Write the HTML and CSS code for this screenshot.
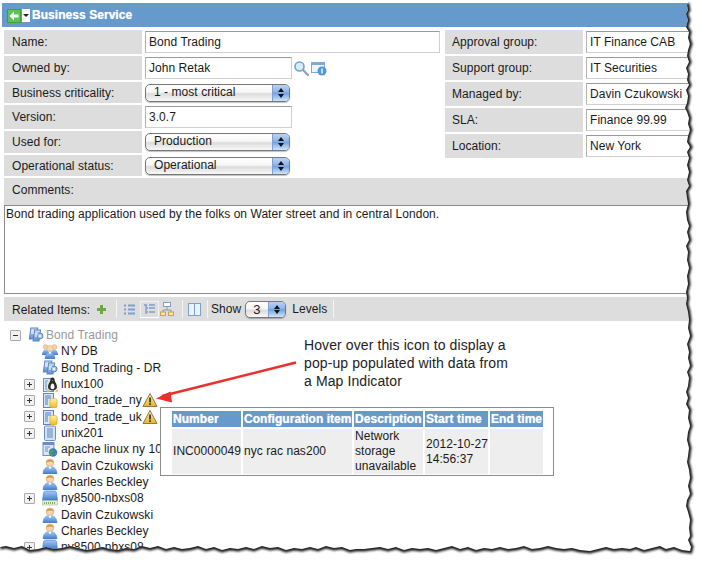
FILE: index.html
```html
<!DOCTYPE html>
<html lang="en">
<head>
<meta charset="utf-8">
<title>Business Service</title>
<link rel="stylesheet" href="styles.css">
</head>
<body>
<svg class="defs" width="0" height="0" aria-hidden="true">
  <defs>
    <linearGradient id="gBlue" x1="0" y1="0" x2="0" y2="1"><stop offset="0" stop-color="#cfe0f5"/><stop offset="1" stop-color="#5d8fd0"/></linearGradient>
    <linearGradient id="gDeep" x1="0" y1="0" x2="0" y2="1"><stop offset="0" stop-color="#a8c8f2"/><stop offset="1" stop-color="#3a7cd0"/></linearGradient>
    <linearGradient id="gGold" x1="0" y1="0" x2="0" y2="1"><stop offset="0" stop-color="#fff2a8"/><stop offset="1" stop-color="#f0b828"/></linearGradient>
    <linearGradient id="gWarn" x1="0" y1="0" x2="0" y2="1"><stop offset="0" stop-color="#fff0a0"/><stop offset="1" stop-color="#eeb030"/></linearGradient>
    <symbol id="i-service" viewBox="0 0 16 16">
      <rect x="1" y="1" width="7" height="11" fill="url(#gBlue)" stroke="#5f86bd" transform="skewX(-8) translate(2 0)"/>
      <rect x="5" y="3" width="6" height="11" fill="url(#gBlue)" stroke="#5f86bd" transform="skewX(-8) translate(2 0)"/>
      <circle cx="12" cy="9" r="3" fill="#a9c4e6" stroke="#5f86bd"/>
      <circle cx="12" cy="9" r="1" fill="#fff"/>
      <path d="M3 4h3M3 6h3M7 7h3M7 9h2" stroke="#fff" stroke-width="1"/>
    </symbol>
    <symbol id="i-group" viewBox="0 0 16 16">
      <circle cx="3.500" cy="4" r="2.400" fill="#f6d0a4" stroke="#d5a878" stroke-width=".5"/>
      <circle cx="12.500" cy="4" r="2.400" fill="#f6d0a4" stroke="#d5a878" stroke-width=".5"/>
      <path d="M0 12c0-3 1.500-5.500 3.500-5.500s4 2.500 4 5.500z" fill="url(#gDeep)"/>
      <path d="M8.500 12c0-3 2-5.500 4-5.500s3.500 2.500 3.500 5.500z" fill="url(#gDeep)"/>
      <circle cx="8" cy="5.500" r="3" fill="#f8d6ae" stroke="#d5a878" stroke-width=".5"/>
      <path d="M3 16c0-4 2.500-7 5-7s5 3 5 7z" fill="url(#gDeep)" stroke="#5f8fd0" stroke-width=".5"/>
      <path d="M6.800 9L8 11.500 9.200 9z" fill="#fff"/>
    </symbol>
    <symbol id="i-linux" viewBox="0 0 16 16">
      <rect x="1.500" y="2.500" width="10" height="13" fill="#dbe6f5" stroke="#6b8fc4"/>
      <path d="M3 5h3M3 7h2M3 9h2M3 11h2M3 13h2" stroke="#6b8fc4"/>
      <path d="M10.500 1.500c-1.500 0-2.200 1.200-2.200 3-.4 1.800-2.300 3.700-2.300 6.500 0 2 2 3.500 4.500 3.500s4.500-1.500 4.500-3.500c0-2.800-1.900-4.700-2.300-6.500 0-1.800-.7-3-2.200-3z" fill="#2b2b2b"/>
      <path d="M10.500 7.500c-1 0-2 1.700-2 3.800 0 1.200.8 2 2 2s2-.8 2-2c0-2.100-1-3.800-2-3.800z" fill="#fff"/>
      <path d="M5.500 13l2.800 2.800H4.500zM15.500 13l-2.800 2.800h3.800zM9.700 4.300h1.600l-.8 1z" fill="#f2c230"/>
    </symbol>
    <symbol id="i-dbserver" viewBox="0 0 16 16">
      <rect x="1.500" y="1.500" width="10" height="14" fill="#dbe6f5" stroke="#5f86bd"/>
      <path d="M3 4h6M3 6h6M3 8h3M3 10h3M3 12h3" stroke="#4f7dc0"/>
      <path d="M8 8c0-1 1.500-1.500 3.500-1.500S15 7 15 8v6.500c0 1-1.500 1.500-3.500 1.500S8 15.500 8 14.500z" fill="url(#gGold)" stroke="#d3a020" stroke-width=".6"/>
    </symbol>
    <symbol id="i-unix" viewBox="0 0 16 16">
      <rect x="2.500" y="1" width="11" height="14.500" rx="1" fill="#d5e2f4" stroke="#6b8fc4"/>
      <path d="M5 4h6M5 6h6M5 8h6M5 10h6M5 12h6" stroke="#5f86bd"/>
    </symbol>
    <symbol id="i-apache" viewBox="0 0 16 16">
      <rect x="1" y="1.500" width="11" height="13" fill="#dbe6f5" stroke="#6b8fc4"/>
      <rect x="1" y="1.500" width="11" height="2.500" fill="#6b8fc4"/>
      <path d="M3 6h5M3 8h3M3 10h3" stroke="#6b8fc4"/>
      <circle cx="11" cy="11.500" r="4.200" fill="#3b79d0"/>
      <path d="M9 9c2-1 3 .5 3 1.500s-2 .5-2 2 1 1.500 1.500 2.500c-2 0-4-1.500-4-3.500 0-1 1-2 1.500-2.500zM13 12c1-.5 2 0 2 .5-.3 1-1 1.800-2 2.200z" fill="#48a848"/>
    </symbol>
    <symbol id="i-person" viewBox="0 0 16 16">
      <circle cx="8" cy="4.800" r="3.800" fill="#f8d2a8" stroke="#d09c62" stroke-width=".6"/>
      <path d="M4.300 4.500C4.800 .8 11.200 .8 11.700 4.500 9.500 3.300 7 3.300 4.300 4.500z" fill="#d0934a"/>
      <path d="M1 16c0-5 3-7.500 7-7.500s7 2.500 7 7.500z" fill="url(#gDeep)" stroke="#4f86cc" stroke-width=".5"/>
      <path d="M6.300 8.500L8 11.500l1.700-3z" fill="#fff"/>
    </symbol>
    <symbol id="i-switch" viewBox="0 0 16 16">
      <path d="M3.500 1h9c1.200 0 1.800.8 2 2l1 7.500H.5l1-7.500c.2-1.200.8-2 2-2z" fill="url(#gDeep)" stroke="#3f78c8" stroke-width=".6"/>
      <rect x=".5" y="10.500" width="15" height="4.500" fill="#e4efdc" stroke="#a8bc9c" stroke-width=".6"/>
      <path d="M2 13h12" stroke="#7fa86e" stroke-width="2" stroke-dasharray="1 1"/>
    </symbol>
    <symbol id="i-warn" viewBox="0 0 16 16">
      <path d="M8 1.500L15 14.500H1z" fill="url(#gWarn)" stroke="#8f7a40" stroke-linejoin="round"/>
      <rect x="7.200" y="5.500" width="1.700" height="5" fill="#333"/>
      <rect x="7.200" y="11.300" width="1.700" height="1.700" fill="#333"/>
    </symbol>
  </defs>
</svg>

<div class="sheet">
  <header class="titlebar">
    <svg class="back" width="14" height="14" viewBox="0 0 14 14"><rect width="14" height="14" fill="#3da53a"/><rect x="1" y="1" width="12" height="12" fill="#5cc454"/><path d="M7 2.500L2.500 7 7 11.500V8.500h4.500v-3H7z" fill="#fff"/></svg>
    <span class="menu-btn"></span>
    <span class="title">Business Service</span>
  </header>

  <div class="form">
    <div class="col col-left">
      <div class="row"><span class="label">Name:</span><span class="input input-wide">Bond Trading</span></div>
      <div class="row"><span class="label">Owned by:</span><span class="input input-mid">John Retak</span>
        <svg class="row-icon" width="16" height="16" viewBox="0 0 16 16"><circle cx="6.500" cy="6.500" r="4.500" fill="#d6ecfa" stroke="#6fa3d0" stroke-width="1.600"/><path d="M10 10l5 5" stroke="#8ca3ba" stroke-width="2.400" stroke-linecap="round"/></svg>
        <svg class="row-icon" width="16" height="16" viewBox="0 0 16 16"><rect x=".5" y="2.500" width="13" height="10" fill="#eef4fb" stroke="#7faad8"/><rect x=".5" y="2.500" width="13" height="2.500" fill="#7faad8"/><circle cx="11" cy="11" r="4.500" fill="#4f98de"/><rect x="10.300" y="8.500" width="1.400" height="5" fill="#fff"/></svg>
      </div>
      <div class="row"><span class="label">Business criticality:</span><span class="select select-sm"><span class="select-text">1 - most critical</span><span class="stepper"></span></span></div>
      <div class="row"><span class="label">Version:</span><span class="input input-mid">3.0.7</span></div>
      <div class="row"><span class="label">Used for:</span><span class="select"><span class="select-text">Production</span><span class="stepper"></span></span></div>
      <div class="row"><span class="label">Operational status:</span><span class="select"><span class="select-text">Operational</span><span class="stepper"></span></span></div>
    </div>
    <div class="col col-right">
      <div class="row"><span class="label">Approval group:</span><span class="input input-fill">IT Finance CAB</span></div>
      <div class="row"><span class="label">Support group:</span><span class="input input-fill">IT Securities</span></div>
      <div class="row"><span class="label">Managed by:</span><span class="input input-fill">Davin Czukowski</span></div>
      <div class="row"><span class="label">SLA:</span><span class="input input-fill">Finance 99.99</span></div>
      <div class="row"><span class="label">Location:</span><span class="input input-fill">New York</span></div>
    </div>
  </div>

  <div class="comments-label">Comments:</div>
  <div class="comments">Bond trading application used by the folks on Water street and in central London.</div>

  <div class="toolbar">
    <span class="tb-label">Related Items:</span>
    <svg class="tb-plus" width="9" height="9" viewBox="0 0 9 9"><path d="M3 0h3v3h3v3H6v3H3V6H0V3h3z" fill="#6fa83f"/></svg>
    <span class="tb-sep tb-sep-a"></span>
    <svg class="tb-list" width="11" height="11" viewBox="0 0 11 11"><path d="M0 1.500h2M4 1.500h7M0 5.500h2M4 5.500h7M0 9.500h2M4 9.500h7" stroke="#7f9fcc" stroke-width="2"/></svg>
    <span class="tb-active"><svg width="11" height="11" viewBox="0 0 11 11"><path d="M0 1h3M2 1v9M2 4h2M2 8h2M5 1h6M5 4h6M5 8h6" stroke="#7f9fcc" stroke-width="1.300"/></svg></span>
    <svg class="tb-map" width="14" height="14" viewBox="0 0 14 14"><rect x="3.500" y=".5" width="7" height="4" fill="#fff" stroke="#7f9fcc"/><path d="M7 5v3M3 10V8h8v2" stroke="#8f9aa8" fill="none"/><rect x=".5" y="10" width="5" height="3.500" fill="#f6e6a8" stroke="#c9a63a"/><rect x="8.500" y="10" width="5" height="3.500" fill="#f6e6a8" stroke="#c9a63a"/></svg>
    <span class="tb-sep tb-sep-b"></span>
    <svg class="tb-split" width="13" height="13" viewBox="0 0 13 13"><rect x=".5" y=".5" width="12" height="12" fill="#eaf2fb" stroke="#7f9fcc"/><path d="M6.500 1v11" stroke="#7f9fcc"/></svg>
    <span class="tb-sep tb-sep-c"></span>
    <span class="tb-text">Show</span>
    <span class="select select-levels"><span class="select-text">3</span><span class="stepper"></span></span>
    <span class="tb-text tb-levels">Levels</span>
    <span class="tb-sep tb-sep-d"></span>
  </div>

  <ul class="tree">
    <li class="node node-root"><span class="exp exp-minus"></span><svg class="ico"><use href="#i-service"/></svg><span>Bond Trading</span></li>
    <li class="node"><span class="exp exp-none"></span><svg class="ico"><use href="#i-group"/></svg><span>NY DB</span></li>
    <li class="node"><span class="exp exp-none"></span><svg class="ico"><use href="#i-service"/></svg><span>Bond Trading - DR</span></li>
    <li class="node"><span class="exp"></span><svg class="ico"><use href="#i-linux"/></svg><span>lnux100</span></li>
    <li class="node"><span class="exp"></span><svg class="ico"><use href="#i-dbserver"/></svg><span>bond_trade_ny</span><svg class="ico-warn"><use href="#i-warn"/></svg></li>
    <li class="node"><span class="exp"></span><svg class="ico"><use href="#i-dbserver"/></svg><span>bond_trade_uk</span><svg class="ico-warn"><use href="#i-warn"/></svg></li>
    <li class="node"><span class="exp"></span><svg class="ico"><use href="#i-unix"/></svg><span>unix201</span></li>
    <li class="node"><span class="exp exp-none"></span><svg class="ico"><use href="#i-apache"/></svg><span>apache linux ny 10</span></li>
    <li class="node"><span class="exp exp-none"></span><svg class="ico"><use href="#i-person"/></svg><span>Davin Czukowski</span></li>
    <li class="node"><span class="exp exp-none"></span><svg class="ico"><use href="#i-person"/></svg><span>Charles Beckley</span></li>
    <li class="node"><span class="exp"></span><svg class="ico"><use href="#i-switch"/></svg><span>ny8500-nbxs08</span></li>
    <li class="node"><span class="exp exp-none"></span><svg class="ico"><use href="#i-person"/></svg><span>Davin Czukowski</span></li>
    <li class="node"><span class="exp exp-none"></span><svg class="ico"><use href="#i-person"/></svg><span>Charles Beckley</span></li>
    <li class="node"><span class="exp"></span><svg class="ico"><use href="#i-switch"/></svg><span>ny8500-nbxs08</span></li>
  </ul>
</div>

<div class="popup">
  <table class="popup-table">
    <thead>
      <tr><th>Number</th><th>Configuration item</th><th>Description</th><th>Start time</th><th>End time</th></tr>
    </thead>
    <tbody>
      <tr><td class="c-num">INC0000049</td><td>nyc rac nas200</td><td class="c-desc">Network storage unavailable</td><td class="c-start">2012-10-27 14:56:37</td><td class="c-end"></td></tr>
    </tbody>
  </table>
</div>

<p class="callout">Hover over this icon to display a<br>pop-up populated with data from<br>a Map Indicator</p>

<svg class="arrow" width="160" height="64" viewBox="0 0 160 64">
  <path d="M154 21.500L20 55" stroke="#ea2f2c" stroke-width="2.600" fill="none"/>
  <path d="M14 57.500L28.500 50.500 30 61.500z" fill="#ea2f2c"/>
</svg>

<svg class="torn" width="701" height="561" viewBox="0 0 701 561" aria-hidden="true">
  <defs>
    <filter id="soft" x="-5%" y="-5%" width="110%" height="110%"><feGaussianBlur stdDeviation="1"/></filter>
    <clipPath id="outside"><use href="#tornFill"/></clipPath>
  </defs>
  <path id="tornFill" class="torn-fill" d="M689 0L687 5 688 10 686 14 688 20 686 27 689 32 688 38 690 44 688 50 687 56 689 62 686 68 688 74 687 80 689 85 686 90 688 96 687 103 685 108 687 112 689 118 688 124 690 130 688 136 687 142 690 147 687 152 689 158 687 165 689 172 687 180 689 186 686 191 687 198 688 204 686 212 687 220 689 226 687 232 689 240 686 246 688 252 687 260 689 268 687 276 688 284 686 292 687 298 686 304 688 312 689 320 688 328 690 336 687 344 689 352 688 358 690 366 687 372 689 378 688 386 686 392 688 398 686 404 689 410 688 418 690 426 688 432 687 440 689 448 688 456 687 462 689 470 690 478 688 486 690 494 687 500 686 506 688 512 690 520 689 528 690 536 688 540 691 547 690 551 682 550 674 547 666 549 660 546 652 548 644 550 636 547 630 549 622 548 614 549 606 547 598 549 590 551 580 550 572 548 564 549 556 548 548 546 540 548 532 549 524 546 516 548 508 549 500 547 492 549 484 548 476 550 468 547 460 549 452 546 444 548 436 550 428 548 420 549 412 548 404 550 396 547 388 549 380 547 372 548 364 549 356 549 350 550 342 547 334 548 326 546 318 549 310 547 302 549 294 548 286 550 278 547 270 548 262 546 254 549 246 547 238 549 230 548 222 550 214 547 206 549 198 546 190 548 182 549 174 547 166 549 158 546 150 548 142 546 134 549 126 548 118 550 110 549 102 547 94 549 86 550 78 548 70 546 62 548 54 549 46 547 38 549 30 550 22 546 14 548 6 546 0 547V561H701V0z"/>
  <g clip-path="url(#outside)">
    <path class="torn-shadow" filter="url(#soft)" d="M687.500 3L687 5 688 10 686 14 688 20 686 27 689 32 688 38 690 44 688 50 687 56 689 62 686 68 688 74 687 80 689 85 686 90 688 96 687 103 685 108 687 112 689 118 688 124 690 130 688 136 687 142 690 147 687 152 689 158 687 165 689 172 687 180 689 186 686 191 687 198 688 204 686 212 687 220 689 226 687 232 689 240 686 246 688 252 687 260 689 268 687 276 688 284 686 292 687 298 686 304 688 312 689 320 688 328 690 336 687 344 689 352 688 358 690 366 687 372 689 378 688 386 686 392 688 398 686 404 689 410 688 418 690 426 688 432 687 440 689 448 688 456 687 462 689 470 690 478 688 486 690 494 687 500 686 506 688 512 690 520 689 528 690 536 688 540 691 547 690 551 682 550 674 547 666 549 660 546 652 548 644 550 636 547 630 549 622 548 614 549 606 547 598 549 590 551 580 550 572 548 564 549 556 548 548 546 540 548 532 549 524 546 516 548 508 549 500 547 492 549 484 548 476 550 468 547 460 549 452 546 444 548 436 550 428 548 420 549 412 548 404 550 396 547 388 549 380 547 372 548 364 549 356 549 350 550 342 547 334 548 326 546 318 549 310 547 302 549 294 548 286 550 278 547 270 548 262 546 254 549 246 547 238 549 230 548 222 550 214 547 206 549 198 546 190 548 182 549 174 547 166 549 158 546 150 548 142 546 134 549 126 548 118 550 110 549 102 547 94 549 86 550 78 548 70 546 62 548 54 549 46 547 38 549 30 550 22 546 14 548 6 546 0 547"/>
  </g>
</svg>
</body>
</html>
```

FILE: styles.css
```css
* { box-sizing: border-box; }

html, body {
  margin: 0;
  padding: 0;
  background: #fff;
}

body {
  position: relative;
  width: 701px;
  height: 561px;
  overflow: hidden;
  font-family: "Liberation Sans", Arial, sans-serif;
  font-size: 12px;
  letter-spacing: .05px;
  color: #1a1a1a;
}

.defs { position: absolute; }

.sheet {
  width: 690px;
  padding: 3px 0 0 2px;
}

/* Title bar */
.titlebar {
  display: flex;
  align-items: center;
  height: 24px;
  padding: 0 0 0 5px;
  background: #6699cc;
}

.back { margin-top: 1px; }

.menu-btn {
  position: relative;
  width: 8px;
  height: 13px;
  margin: 1px 2px 0 1px;
  background: #fff;
}

.menu-btn::after {
  content: "";
  position: absolute;
  left: 1px;
  top: 5px;
  border: 3px solid transparent;
  border-top: 3px solid #222;
  border-bottom: 0;
}

.title {
  font-weight: bold;
  color: #fff;
  text-shadow: 0 0 1px #cfe0f2;
}

/* Form */
.form {
  display: grid;
  grid-template-columns: 436px 1fr;
  column-gap: 5px;
  padding: 3px 0 0 2px;
}

.col {
  display: grid;
  row-gap: 2px;
  align-content: start;
}

.col-left { grid-template-rows: 24px 24px 21px 24px 22px 21px; }
.col-right { grid-template-rows: repeat(5, 24px); }

.row {
  display: flex;
  align-items: center;
  min-width: 0;
}

.label {
  flex: none;
  display: flex;
  align-items: center;
  width: 138px;
  height: 100%;
  padding-left: 8px;
  margin-right: 3px;
  background: #dddddd;
}

.col-right .label { padding-left: 7px; }

.input {
  display: flex;
  align-items: center;
  height: 22px;
  padding-left: 3px;
  background: #fff;
  border: 1px solid #d0d0d0;
  border-top-color: #9a9a9a;
  border-left-color: #b4b4b4;
  white-space: nowrap;
  overflow: hidden;
}

.input-wide { width: 295px; }
.input-mid { width: 147px; }
.input-fill { flex: 1; min-width: 0; }

.row-icon { margin-left: 2px; }
.input-mid + .row-icon { margin-left: 1px; margin-top: -1px; }

/* Aqua-style select */
.select {
  display: flex;
  width: 145px;
  height: 18px;
  border: 1px solid #777;
  border-radius: 5px;
  overflow: hidden;
  background: linear-gradient(#fff 0%, #f6f6f6 45%, #dcdcdc 55%, #f8f8f8 100%);
  box-shadow: 0 1px 1px rgba(0, 0, 0, .25);
}

.select-sm { height: 18px; }

.select-text {
  flex: 1;
  padding-left: 8px;
  line-height: 15px;
}

.stepper {
  position: relative;
  flex: none;
  width: 17px;
  background: linear-gradient(#b8d2f4 0%, #8fb4e8 45%, #6fa0e2 50%, #d0e4fa 100%);
  border-left: 1px solid #7f9fd0;
}

.stepper::before,
.stepper::after {
  content: "";
  position: absolute;
  left: 5px;
  border-left: 3px solid transparent;
  border-right: 3px solid transparent;
}

.stepper::before { top: 3px; border-bottom: 4px solid #111; }
.stepper::after { bottom: 3px; border-top: 4px solid #111; }

/* Comments */
.comments-label {
  display: flex;
  align-items: center;
  height: 27px;
  margin: 2px 0 0 2px;
  padding: 0 0 4px 8px;
  background: #dddddd;
}

.comments {
  height: 89px;
  margin: 0 0 0 2px;
  padding: 1px 1px;
  border: 1px solid #8a8a8a;
  border-right: 0;
  background: #fff;
}

/* Related items toolbar */
.toolbar {
  display: flex;
  align-items: center;
  height: 24px;
  margin: 3px 0 0 2px;
  padding-left: 8px;
  background: #dddddd;
}

.tb-label { width: 85px; margin-top: 1px; }
.tb-plus { margin-right: 10px; margin-top: 1px; }

.tb-sep {
  width: 1px;
  height: 18px;
  background: #f4f4f4;
}

.tb-list { margin-left: 7px; }

.tb-active {
  display: flex;
  align-items: center;
  justify-content: center;
  width: 19px;
  height: 17px;
  margin-left: 5px;
  border: 1px solid #f2f2f2;
  border-bottom-color: #fff;
}

.tb-map { margin-left: 1px; }
.tb-sep-b { margin-left: 8px; }
.tb-split { margin-left: 5px; }
.tb-sep-c { margin-left: 6px; }
.tb-text { margin-left: 3px; }

.select-levels {
  width: 41px;
  height: 17px;
  margin-left: 4px;
  margin-top: 1px;
}

.select-levels .select-text {
  padding-left: 7px;
  font-size: 13px;
}

.tb-levels { margin-left: 6px; }
.tb-sep-d { margin-left: 6px; }

/* Tree */
.tree {
  list-style: none;
  margin: 0;
  padding: 6px 0 0 22px;
}

.node {
  display: flex;
  align-items: center;
  height: 16.33px;
  white-space: nowrap;
}

.node-root {
  margin-left: -14px;
  color: #999;
}

.node-root .ico { margin-right: 2px; }

.exp {
  position: relative;
  flex: none;
  width: 11px;
  height: 11px;
  margin-right: 7px;
  background: #f1f1f1;
  border: 1px solid #aaa;
  border-radius: 1px;
}

.exp::before {
  content: "";
  position: absolute;
  left: 2px;
  top: 4px;
  width: 5px;
  height: 1px;
  background: #333;
}

.exp::after {
  content: "";
  position: absolute;
  left: 4px;
  top: 2px;
  width: 1px;
  height: 5px;
  background: #333;
}

.exp-minus::after { display: none; }

.exp-none {
  background: none;
  border: 0;
}

.exp-none::before,
.exp-none::after { display: none; }

.ico {
  flex: none;
  width: 16px;
  height: 16px;
  margin-right: 3px;
}

.ico-warn {
  flex: none;
  width: 16px;
  height: 16px;
}

/* Pop-up */
.popup {
  position: absolute;
  left: 160px;
  top: 407px;
  width: 394px;
  height: 69px;
  padding: 1px 0 0 9px;
  background: #fff;
  border: 1px solid #8c8c8c;
}

.popup-table {
  border-collapse: separate;
  border-spacing: 2px;
  margin: 0;
  table-layout: fixed;
  width: 375px;
}

.popup-table th,
.popup-table td { padding: 0 0 0 1px; text-align: left; }

.popup-table th {
  height: 16px;
  background: #6699cc;
  color: #fff;
  font-weight: bold;
  white-space: nowrap;
  overflow: hidden;
  text-shadow: 0 0 1px #cfe0f2;
}

.popup-table td {
  height: 45px;
  background: #eeeeee;
  line-height: 15px;
}

.popup-table th:nth-child(1) { width: 69px; }
.popup-table th:nth-child(2) { width: 109px; }
.popup-table th:nth-child(3) { width: 69px; }
.popup-table th:nth-child(4) { width: 63px; }
.popup-table th:nth-child(5) { width: 53px; }

/* Annotation */
.callout {
  position: absolute;
  left: 304px;
  top: 336px;
  margin: 0;
  font-size: 14px;
  line-height: 18px;
  letter-spacing: .1px;
  color: #222;
  white-space: nowrap;
}

.arrow {
  position: absolute;
  left: 142px;
  top: 341px;
}

/* Torn paper edge */
.torn {
  position: absolute;
  left: 0;
  top: 0;
}

.torn-fill { fill: #fff; }

.torn-shadow {
  fill: none;
  stroke: #1e1e1e;
  stroke-width: 5;
}
```
